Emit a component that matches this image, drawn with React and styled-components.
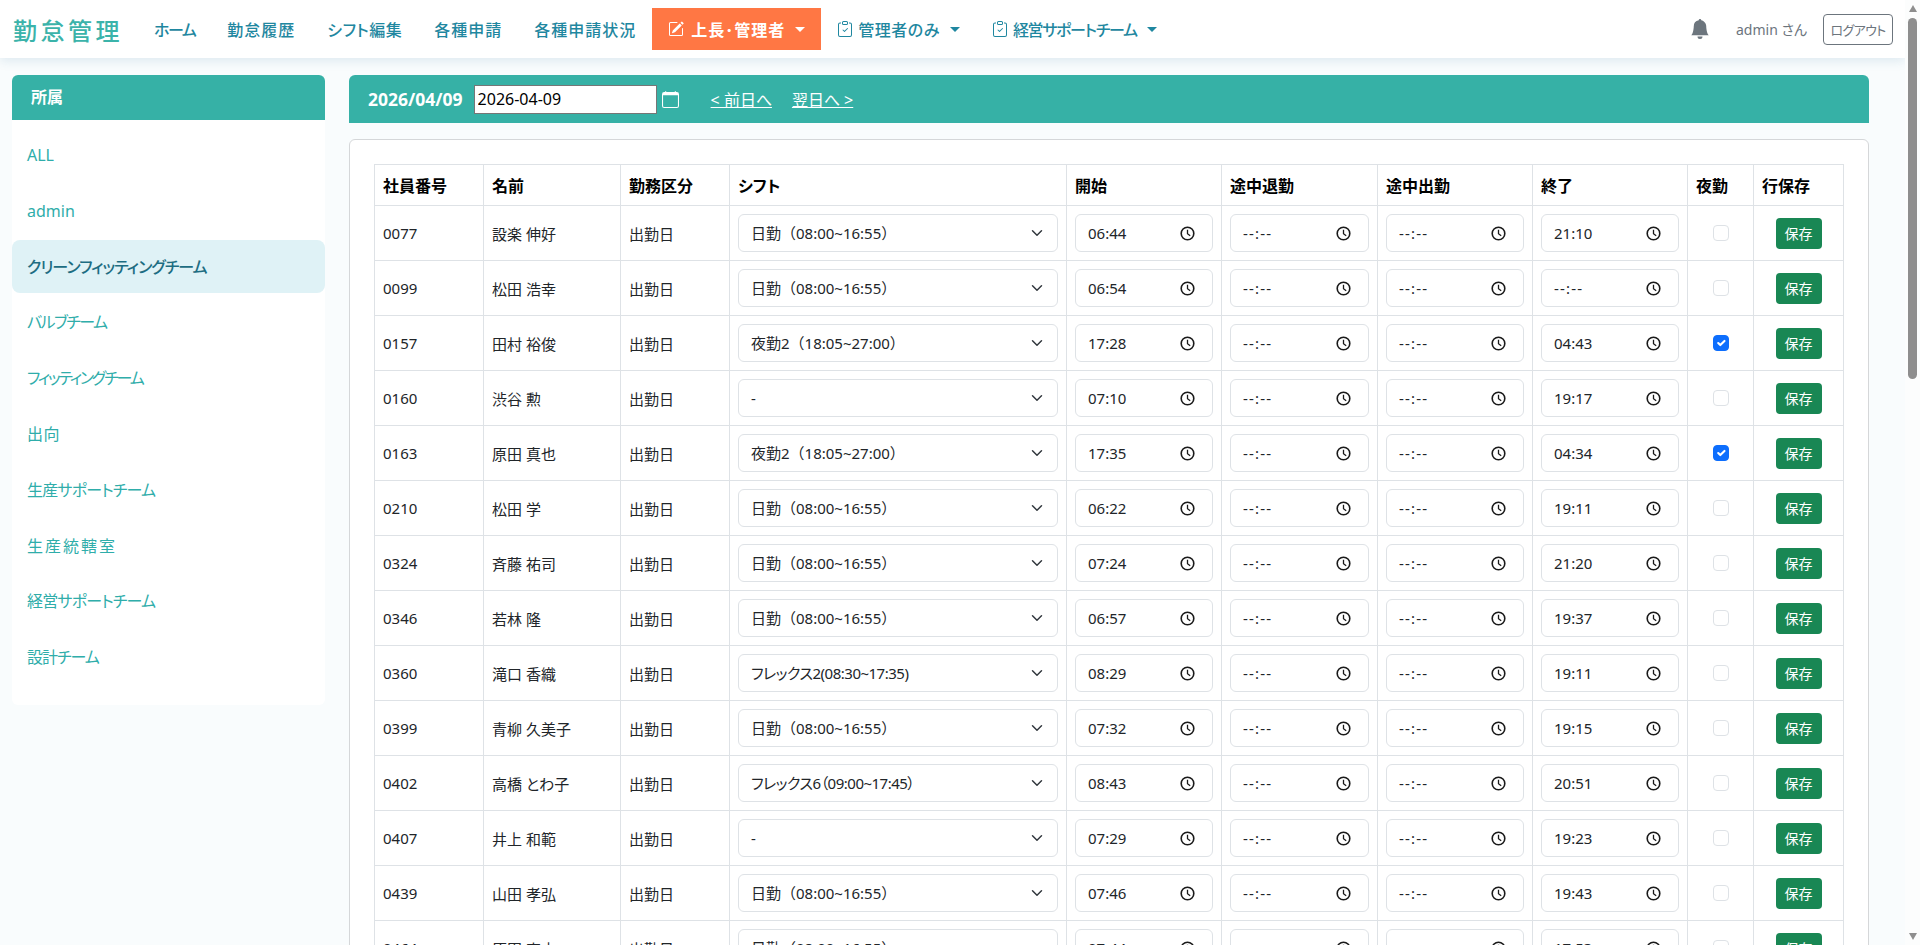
import React from "react";
import styled, { createGlobalStyle } from "styled-components";
import {
  BsBellFill,
  BsCalendar,
  BsClipboardCheck,
  BsPencilSquare,
} from "react-icons/bs";

const DAY = "日勤（08:00~16:55）";
const NIGHT = "夜勤2（18:05~27:00）";
const FLEX2 = "フレックス2(08:30~17:35)";
const FLEX6 = "フレックス6（09:00~17:45）";
const SHIFTS = ["-", DAY, NIGHT, FLEX2, FLEX6];

const rows = [
  ["0077", "設楽 伸好", DAY, "06:44", "21:10", false],
  ["0099", "松田 浩幸", DAY, "06:54", "", false],
  ["0157", "田村 裕俊", NIGHT, "17:28", "04:43", true],
  ["0160", "渋谷 勲", "-", "07:10", "19:17", false],
  ["0163", "原田 真也", NIGHT, "17:35", "04:34", true],
  ["0210", "松田 学", DAY, "06:22", "19:11", false],
  ["0324", "斉藤 祐司", DAY, "07:24", "21:20", false],
  ["0346", "若林 隆", DAY, "06:57", "19:37", false],
  ["0360", "滝口 香織", FLEX2, "08:29", "19:11", false],
  ["0399", "青柳 久美子", DAY, "07:32", "19:15", false],
  ["0402", "高橋 とわ子", FLEX6, "08:43", "20:51", false],
  ["0407", "井上 和範", "-", "07:29", "19:23", false],
  ["0439", "山田 孝弘", DAY, "07:46", "19:43", false],
  ["0464", "原田 宏史", DAY, "07:44", "17:53", false],
];

const teams = [
  ["ALL", 0],
  ["admin", 0],
  ["クリーンフィッティングチーム", -1],
  ["バルブチーム", -1.6],
  ["フィッティングチーム", -2.2],
  ["出向", 0.5],
  ["生産サポートチーム", -0.8],
  ["生産統轄室", 2],
  ["経営サポートチーム", -0.8],
  ["設計チーム", -1],
];

const columns = [
  ["社員番号", 109],
  ["名前", 137],
  ["勤務区分", 109],
  ["シフト", 337],
  ["開始", 155],
  ["途中退勤", 156],
  ["途中出勤", 155],
  ["終了", 155],
  ["夜勤", 66],
  ["行保存", 90],
];

const Global = createGlobalStyle`
  html, body {
    height: 100%;
    overflow: hidden;
  }
  body {
    margin: 0;
    background: #f9fcfd;
    color: #212529;
    font-family: "Noto Sans", "Noto Sans CJK JP", sans-serif;
    font-size: 15px;
  }
  * {
    box-sizing: border-box;
  }
`;

const Shell = styled.div`
  display: flex;
  height: 100vh;
`;
const Page = styled.div`
  flex: 1;
  min-width: 0;
  overflow: hidden;
`;
const ScrollRail = styled.div`
  flex: none;
  width: 15px;
  display: flex;
  flex-direction: column;
  align-items: center;
  padding: 5px 0;
  background: #fcfdfd;
`;
const Thumb = styled.div`
  width: 9px;
  height: 361px;
  margin: 6px 0 auto;
  background: #8e8e8e;
  border-radius: 5px;
`;
const Arrow = styled.span`
  border-left: 4.5px solid transparent;
  border-right: 4.5px solid transparent;
  ${({ $down }) =>
    $down ? "border-top: 7px solid #8e8e8e;" : "border-bottom: 7px solid #8e8e8e;"}
`;

const Nav = styled.nav`
  display: flex;
  align-items: center;
  height: 58px;
  padding: 0 12px 0 13px;
  background: #fff;
  box-shadow: 0 3px 10px rgba(60, 120, 160, 0.14);
  font-feature-settings: "palt";
`;
const Logo = styled.div`
  font-size: 24px;
  letter-spacing: 3.5px;
  font-weight: 500;
  color: #3bb3aa;
  margin-right: 15px;
`;
const NavLink = styled.a`
  display: flex;
  align-items: center;
  height: 42px;
  padding: 0 16px;
  font-size: 16px;
  font-weight: ${({ $active }) => ($active ? 700 : 500)};
  letter-spacing: ${({ $track }) => $track || 0}px;
  white-space: nowrap;
  color: ${({ $active }) => ($active ? "#fff" : "#1f87a0")};
  background: ${({ $active }) => ($active ? "#ff7744" : "transparent")};
  svg {
    font-size: 16px;
    flex: none;
    margin-right: ${({ $active }) => ($active ? 7 : 5)}px;
  }
`;
const Caret = styled.span`
  margin-left: 10px;
  border-top: 5px solid currentColor;
  border-left: 5px solid transparent;
  border-right: 5px solid transparent;
`;
const NavRight = styled.div`
  margin-left: auto;
  display: flex;
  align-items: center;
  color: #6c757d;
`;
const Bell = styled.span`
  display: flex;
  font-size: 20px;
  margin-right: 26px;
`;
const UserName = styled.span`
  font-size: 14px;
  margin-right: 16px;
`;
const Logout = styled.button`
  width: 70px;
  height: 31px;
  padding: 0;
  background: #fff;
  border: 1px solid #6c757d;
  border-radius: 4px;
  color: #6c757d;
  font: inherit;
  font-size: 13px;
  letter-spacing: -0.6px;
  font-feature-settings: "palt";
`;

const Layout = styled.div`
  display: flex;
  gap: 24px;
  padding: 17px 36px 0 12px;
  align-items: flex-start;
`;
const Side = styled.aside`
  flex: none;
  width: 313px;
  background: #fff;
  border-radius: 6px;
  font-feature-settings: "palt";
`;
const SideHead = styled.div`
  height: 45px;
  line-height: 45px;
  padding-left: 19px;
  background: #36b1a6;
  color: #fff;
  font-size: 16px;
  font-weight: 700;
  border-radius: 6px 6px 0 0;
`;
const SideList = styled.div`
  display: flex;
  flex-direction: column;
  gap: 2.8px;
  padding: 8px 0 22px;
`;
const SideItem = styled.a`
  height: 53px;
  line-height: 55px;
  padding-left: 15px;
  font-size: 16px;
  letter-spacing: ${({ $track }) => $track}px;
  border-radius: 8px;
  color: ${({ $active }) => ($active ? "#1d6d82" : "#2fadaa")};
  background: ${({ $active }) => ($active ? "#dff2f6" : "transparent")};
  font-weight: ${({ $active }) => ($active ? 500 : 400)};
`;

const Main = styled.main`
  flex: 1;
  min-width: 0;
`;
const DateBar = styled.div`
  display: flex;
  align-items: center;
  height: 48px;
  padding-left: 19px;
  margin-bottom: 16px;
  background: #36b1a6;
  color: #fff;
  border-radius: 6px 6px 0 0;
`;
const DateTitle = styled.span`
  font-size: 17.5px;
  font-weight: 700;
  margin-right: 11px;
`;
const DateInput = styled.input`
  width: 183px;
  height: 29px;
  padding: 0 3px;
  border: 1px solid #767676;
  font: inherit;
  font-size: 16px;
  color: #000;
  background: #fff;
`;
const CalendarMark = styled.span`
  display: flex;
  font-size: 17px;
  margin: 0 32px 0 5px;
`;
const DayLink = styled.a`
  color: #fff;
  font-size: 16px;
  text-decoration: underline;
  margin-right: 20px;
`;
const Card = styled.div`
  padding: 24px;
  background: #fff;
  border: 1px solid #d5d7d9;
  border-radius: 6px;
`;
const Table = styled.table`
  width: 1469px;
  table-layout: fixed;
  border-collapse: collapse;
  font-feature-settings: "palt";
`;
const Th = styled.th`
  height: 41px;
  padding: 0 8px;
  border: 1px solid #dee2e6;
  text-align: left;
  font-weight: 700;
  font-size: 16px;
  color: #000;
`;
const Td = styled.td`
  height: 55px;
  padding: 0 8px;
  border: 1px solid #dee2e6;
  text-align: ${({ $center }) => ($center ? "center" : "left")};
  vertical-align: middle;
`;
const Select = styled.select`
  display: block;
  width: 100%;
  height: 38px;
  padding: 0 36px 0 12px;
  border: 1px solid #dee2e6;
  border-radius: 6px;
  color: #212529;
  font-family: inherit;
  font-size: 15px;
  font-feature-settings: ${({ $kana }) => ($kana ? '"palt"' : "normal")};
  letter-spacing: ${({ $kana }) => ($kana ? -0.5 : 0)}px;
  appearance: none;
  background-color: #fff;
  background-image: url("data:image/svg+xml,%3csvg xmlns='http://www.w3.org/2000/svg' viewBox='0 0 16 16'%3e%3cpath fill='none' stroke='%23343a40' stroke-linecap='round' stroke-linejoin='round' stroke-width='2' d='m2 5 6 6 6-6'/%3e%3c/svg%3e");
  background-repeat: no-repeat;
  background-position: right 12px center;
  background-size: 16px 12px;
`;
const TimeField = styled.label`
  display: flex;
  align-items: center;
  height: 38px;
  padding: 0 17px 0 12px;
  border: 1px solid #dee2e6;
  border-radius: 6px;
  background: #fff;
  svg {
    flex: none;
    width: 15px;
    height: 15px;
  }
`;
const TimeText = styled.input`
  flex: 1;
  min-width: 0;
  padding: 0;
  border: none;
  outline: none;
  background: transparent;
  color: #212529;
  font-family: inherit;
  font-size: 15px;
  &::placeholder {
    color: #212529;
    letter-spacing: 1.2px;
    opacity: 1;
  }
`;
const Check = styled.input`
  display: block;
  width: 16px;
  height: 16px;
  margin: 0 auto;
  appearance: none;
  background-color: #fff;
  border: 1px solid #dee2e6;
  border-radius: 4px;
  &:checked {
    background-color: #0d6efd;
    border-color: #0d6efd;
    background-image: url("data:image/svg+xml,%3csvg xmlns='http://www.w3.org/2000/svg' viewBox='0 0 20 20'%3e%3cpath fill='none' stroke='%23fff' stroke-linecap='round' stroke-linejoin='round' stroke-width='3' d='m6 10 3 3 6-6'/%3e%3c/svg%3e");
  }
`;
const SaveButton = styled.button`
  display: block;
  width: 46px;
  height: 31px;
  margin: 0 auto;
  padding: 0;
  border: none;
  border-radius: 4px;
  background: #198754;
  color: #fff;
  font: inherit;
  font-size: 14px;
`;

const Clock = () => (
  <svg viewBox="0 0 15 15" fill="none" stroke="#1a1a1a">
    <circle cx="7.5" cy="7.5" r="6.3" strokeWidth="1.6" />
    <path d="M7.5 3.8v3.9l2.7 2.1" strokeWidth="1.3" />
  </svg>
);

const TimeBox = ({ value }) => (
  <TimeField>
    <TimeText defaultValue={value} placeholder="--:--" />
    <Clock />
  </TimeField>
);

const NavMenu = ({ icon, children, active, track }) => (
  <NavLink $active={active} $track={track}>
    {icon}
    {children}
    <Caret />
  </NavLink>
);

const Row = ({ row }) => {
  const [code, name, shift, start, end, night] = row;
  return (
    <tr>
      <Td>{code}</Td>
      <Td>{name}</Td>
      <Td>出勤日</Td>
      <Td>
        <Select defaultValue={shift} $kana={shift.startsWith("フ")}>
          {SHIFTS.map((s) => (
            <option key={s}>{s}</option>
          ))}
        </Select>
      </Td>
      <Td>
        <TimeBox value={start} />
      </Td>
      <Td>
        <TimeBox />
      </Td>
      <Td>
        <TimeBox />
      </Td>
      <Td>
        <TimeBox value={end} />
      </Td>
      <Td $center>
        <Check type="checkbox" defaultChecked={night} />
      </Td>
      <Td $center>
        <SaveButton>保存</SaveButton>
      </Td>
    </tr>
  );
};

const App = () => {
  return (
    <Shell>
      <Global />
      <Page>
        <Nav>
          <Logo>勤怠管理</Logo>
          <NavLink $track={-1.5}>ホーム</NavLink>
          <NavLink $track={1}>勤怠履歴</NavLink>
          <NavLink $track={0.5}>シフト編集</NavLink>
          <NavLink $track={1}>各種申請</NavLink>
          <NavLink $track={1}>各種申請状況</NavLink>
          <NavMenu active track={1} icon={<BsPencilSquare />}>
            上長･管理者
          </NavMenu>
          <NavMenu track={0.5} icon={<BsClipboardCheck />}>
            管理者のみ
          </NavMenu>
          <NavMenu track={-1.3} icon={<BsClipboardCheck />}>
            経営サポートチーム
          </NavMenu>
          <NavRight>
            <Bell>
              <BsBellFill />
            </Bell>
            <UserName>admin さん</UserName>
            <Logout>ログアウト</Logout>
          </NavRight>
        </Nav>
        <Layout>
          <Side>
            <SideHead>所属</SideHead>
            <SideList>
              {teams.map(([name, track]) => (
                <SideItem key={name} $track={track} $active={name === teams[2][0]}>
                  {name}
                </SideItem>
              ))}
            </SideList>
          </Side>
          <Main>
            <DateBar>
              <DateTitle>2026/04/09</DateTitle>
              <DateInput defaultValue="2026-04-09" />
              <CalendarMark>
                <BsCalendar />
              </CalendarMark>
              <DayLink>&lt; 前日へ</DayLink>
              <DayLink>翌日へ &gt;</DayLink>
            </DateBar>
            <Card>
              <Table>
                <colgroup>
                  {columns.map(([label, width]) => (
                    <col key={label} width={width} />
                  ))}
                </colgroup>
                <thead>
                  <tr>
                    {columns.map(([label]) => (
                      <Th key={label}>{label}</Th>
                    ))}
                  </tr>
                </thead>
                <tbody>
                  {rows.map((row) => (
                    <Row key={row[0]} row={row} />
                  ))}
                </tbody>
              </Table>
            </Card>
          </Main>
        </Layout>
      </Page>
      <ScrollRail>
        <Arrow />
        <Thumb />
        <Arrow $down />
      </ScrollRail>
    </Shell>
  );
};

export default App;
